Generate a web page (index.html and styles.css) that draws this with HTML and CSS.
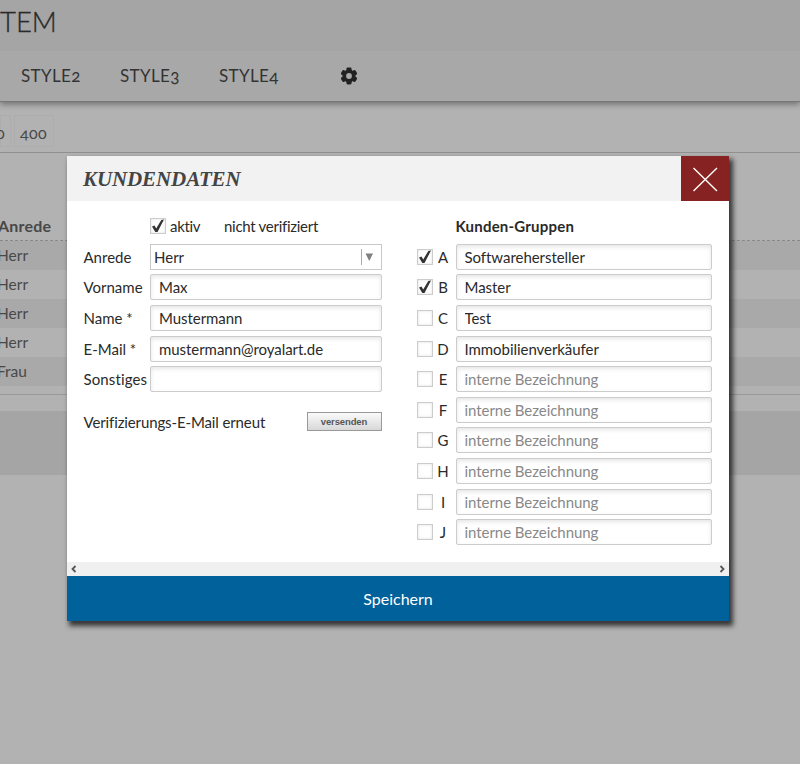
FILE: index.html
```
<!DOCTYPE html>
<html lang="de">
<head>
<meta charset="utf-8">
<title>Kundendaten</title>
<link rel="stylesheet" href="styles.css">
</head>
<body>
<div class="page">
  <header class="brand">TEM</header>
  <nav class="nav">
    <a>STYLE2</a><a>STYLE3</a><a>STYLE4</a>
    <svg class="gear" viewBox="0 0 18 18" width="18" height="18"><g fill="#222"><rect x="6.4" y="0.6" width="5.2" height="16.8" rx="1.4"/><rect x="6.4" y="0.6" width="5.2" height="16.8" rx="1.4" transform="rotate(60 9 9)"/><rect x="6.4" y="0.6" width="5.2" height="16.8" rx="1.4" transform="rotate(120 9 9)"/><circle cx="9" cy="9" r="6.5"/></g><circle cx="9" cy="9" r="2.9" fill="#a8a8a8"/></svg>
  </nav>
  <div class="pager"><span class="cut">0</span><span>400</span></div>
  <div class="table">
    <div class="th">Anrede</div>
    <div class="tr">Herr</div><div class="tr">Herr</div><div class="tr">Herr</div><div class="tr">Herr</div><div class="tr">Frau</div>
  </div>
  <div class="band"></div>
</div>
<section class="modal">
  <div class="head"><h1>KUNDENDATEN</h1><button class="close"><svg viewBox="0 0 48 45" width="48" height="45"><path d="M12.500 12L36 35M36 12L12.500 35" stroke="#fff" stroke-width="1.400"/></svg></button></div>
  <div class="body">
    <div class="left">
      <div class="row"><span></span><div class="status"><span class="box"><svg viewBox="0 0 16 16"><path d="M2 8.500L4.500 7.500L6.200 10.500L11.300 2L14 1.600L7.500 14L5.300 14Z"/></svg></span><span class="t-aktiv">aktiv</span><span class="t-nv">nicht verifiziert</span></div></div>
      <div class="row"><label>Anrede</label><div class="select"><span>Herr</span><svg viewBox="0 0 20 20" width="20" height="20"><path d="M.5 2V18" stroke="#aaa"/><path d="M4.500 6.500H12L8.250 14Z" fill="#808080"/></svg></div></div>
      <div class="row"><label>Vorname</label><input value="Max"></div>
      <div class="row"><label>Name *</label><input value="Mustermann"></div>
      <div class="row"><label>E-Mail *</label><input value="mustermann@royalart.de"></div>
      <div class="row"><label class="wide">Sonstiges</label><input value=""></div>
      <div class="verify"><span>Verifizierungs-E-Mail erneut</span><button>versenden</button></div>
    </div>
    <div class="right">
      <div class="row"><span></span><span></span><b>Kunden-Gruppen</b></div>
      <div class="row"><span class="box"><svg viewBox="0 0 16 16"><path d="M2 8.500L4.500 7.500L6.200 10.500L11.300 2L14 1.600L7.500 14L5.300 14Z"/></svg></span><i>A</i><input value="Softwarehersteller"></div>
      <div class="row"><span class="box"><svg viewBox="0 0 16 16"><path d="M2 8.500L4.500 7.500L6.200 10.500L11.300 2L14 1.600L7.500 14L5.300 14Z"/></svg></span><i>B</i><input value="Master"></div>
      <div class="row"><span class="box"></span><i>C</i><input value="Test"></div>
      <div class="row"><span class="box"></span><i>D</i><input value="Immobilienverkäufer"></div>
      <div class="row"><span class="box"></span><i>E</i><input placeholder="interne Bezeichnung"></div>
      <div class="row"><span class="box"></span><i>F</i><input placeholder="interne Bezeichnung"></div>
      <div class="row"><span class="box"></span><i>G</i><input placeholder="interne Bezeichnung"></div>
      <div class="row"><span class="box"></span><i>H</i><input placeholder="interne Bezeichnung"></div>
      <div class="row"><span class="box"></span><i>I</i><input placeholder="interne Bezeichnung"></div>
      <div class="row"><span class="box"></span><i>J</i><input placeholder="interne Bezeichnung"></div>
    </div>
  </div>
  <div class="scroll"><svg viewBox="0 0 6 8" width="6" height="8"><path d="M4.500 1L1.500 4L4.500 7"/></svg><svg viewBox="0 0 6 8" width="6" height="8"><path d="M1.500 1L4.500 4L1.500 7"/></svg></div>
  <button class="save">Speichern</button>
</section>
</body>
</html>
```
FILE: styles.css
```
* { box-sizing: border-box; }
body { margin: 0; height: 764px; overflow: hidden; background: #b2b2b2; color: #2a2a2a; font: 15px/20px Lato, "Open Sans", sans-serif; font-feature-settings: "onum"; }
input, button { font: inherit; color: inherit; letter-spacing: inherit; }
.brand { position: relative; z-index: 1; height: 51px; background: #a5a5a5; font-size: 27.500px; font-weight: 300; line-height: 43px; -webkit-text-stroke: .3px #2a2a2a; }
.nav { position: relative; height: 51px; display: flex; align-items: center; gap: 39px; padding: 0 0 0 21px; background: #a8a8a8; border-bottom: 1px solid #777; box-shadow: 0 2px 6px rgba(0,0,0,.4); font-size: 17px; letter-spacing: .35px; color: #333; }
.nav a { width: 60px; white-space: nowrap; }
.gear { margin-left: 22px; }
.pager { height: 51px; padding-top: 13px; display: flex; gap: 3px; border-bottom: 1px solid #909090; color: #484848; font-size: 16px; }
.pager span { height: 32px; line-height: 33px; width: 40px; padding-left: 5px; border: 1px solid #adadad; letter-spacing: .4px; }
.pager .cut { width: 11px; padding: 0; text-indent: -5px; }
.table { padding-top: 60px; height: 242px; border-bottom: 1px solid #999; color: #484848; }
.th { height: 28px; line-height: 25px; font-weight: 700; border-bottom: 1px dashed #888; text-indent: -2px; font-size: 16px; letter-spacing: .2px; }
.tr { height: 29px; line-height: 29px; text-indent: -3px; font-size: 15.500px; }
.tr:nth-child(even) { background: #a9a9a9; }
.band { margin-top: 16px; height: 64px; background: #a5a5a5; }
.modal { position: absolute; left: 67px; top: 156px; width: 662px; height: 465px; display: flex; flex-direction: column; background: #fff; box-shadow: 3px 4px 5px 1px rgba(0,0,0,.7); }
.head { height: 45px; display: flex; justify-content: space-between; background: #f2f2f2; }
h1 { margin: 0; padding-left: 16px; font: italic bold 21px/46px "Liberation Serif", serif; letter-spacing: -.1px; color: #444; }
.close { width: 48px; height: 45px; padding: 0; border: 0; background: #862222; }
.close svg { display: block; }
.body { height: 361px; display: flex; padding: 9.900px 17px 0 16.500px; }
.left { width: 298px; margin-right: 35px; }
.right { width: 296px; }
.row { height: 30.600px; display: grid; align-items: center; grid-template-columns: 66.500px 231.500px; white-space: nowrap; }
.right .row { grid-template-columns: 17px 22px 256px; }
i { font-style: normal; margin-left: -3px; text-align: center; }
b { letter-spacing: .2px; }
.wide { letter-spacing: .12px; }
input { width: 100%; height: 26px; padding: 0 8px; border: 1px solid #ccc; border-radius: 2px; background: #fff; box-shadow: inset 0 2px 4px rgba(0,0,0,.1); outline: 0; letter-spacing: -.05px; }
input::placeholder { color: #888; opacity: 1; }
.select { height: 26px; display: flex; align-items: center; justify-content: space-between; padding-left: 3px; border: 1px solid #c8c8c8; }
.status { display: flex; align-items: center; }
.box { width: 16px; height: 16px; border: 1px solid #ccc; background: #fff; box-shadow: inset 0 0 3px rgba(0,0,0,.12); display: block; }
.box svg { display: block; width: 16px; height: 16px; margin: -1px; fill: #333; }
.t-aktiv { width: 54px; margin-left: 4px; letter-spacing: -.3px; }
.t-nv { letter-spacing: -.28px; }
.verify { height: 30px; margin-top: 12.500px; display: flex; align-items: center; justify-content: space-between; letter-spacing: -.12px; }
.verify button { width: 75px; height: 19px; padding: 0; border: 1px solid #999; background: linear-gradient(#fafafa, #d8d8d8); font: bold 9.500px "Liberation Sans", sans-serif; color: #555; }
.scroll { height: 14px; background: #f0f0f0; display: flex; align-items: center; justify-content: space-between; padding: 0 4px; }
.scroll path { fill: none; stroke: #555; stroke-width: 1.800; }
.save { height: 45px; border: 0; padding: 0; background: #00619b; color: #fff; font-size: 16px; }
```
